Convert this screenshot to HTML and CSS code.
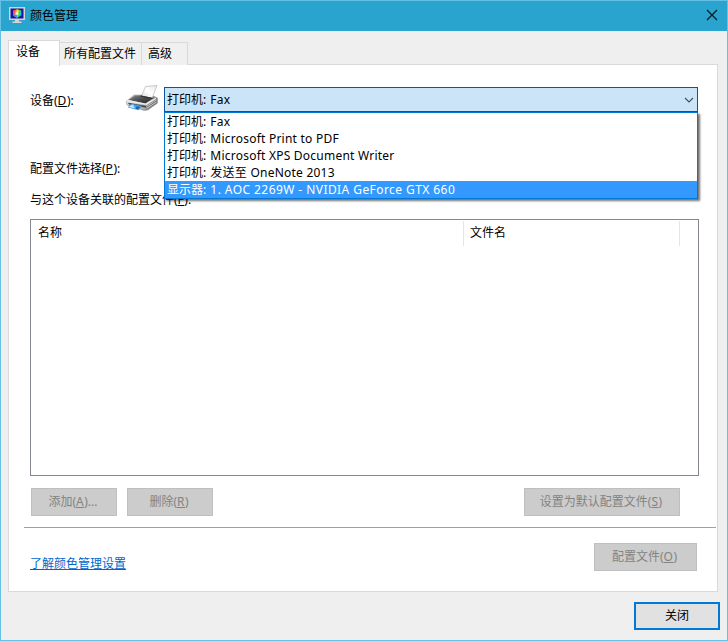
FILE: index.html
```html
<!DOCTYPE html>
<html lang="zh-CN">
<head>
<meta charset="utf-8">
<title>颜色管理</title>
<link rel="stylesheet" href="styles.css">
</head>
<body>
<div class="window">
  <header class="titlebar">
    <svg class="app-icon" width="16" height="16" viewBox="0 0 16 16">
      <defs>
        <linearGradient id="hue" x1="0" x2="1" y1="0" y2="0.3">
          <stop offset="0" stop-color="#f22bd0"/><stop offset=".3" stop-color="#ff5a3c"/><stop offset=".55" stop-color="#ffe82a"/><stop offset=".8" stop-color="#35dc3c"/><stop offset="1" stop-color="#18c8e8"/>
        </linearGradient>
        <radialGradient id="glow"><stop offset="0" stop-color="#fff"/><stop offset="1" stop-color="#fff" stop-opacity="0"/></radialGradient>
      </defs>
      <path d="M0 0h16v13H0z" fill="#d9d3cb"/>
      <path d="M1.5 1.5h13v10h-13z" fill="#1418a8"/>
      <path d="M4 3.5 8 2.2l4.3 1.3v4.7L8 11 4 8.2z" fill="url(#hue)"/>
      <path d="M4 7.5h4V11L4 8.2z" fill="#3b8bff"/>
      <circle cx="8" cy="6.5" r="2.2" fill="url(#glow)"/>
      <path d="M6 13h4v1.4h2.5V16h-9v-1.6H6z" fill="#d4d4d4"/>
    </svg>
    <h1 class="title">颜色管理</h1>
    <svg class="close" width="12" height="12" viewBox="0 0 12 12"><path d="M1 1l10 10M11 1L1 11" stroke="#0b1a20" stroke-width="1.3"/></svg>
  </header>

  <nav class="tabs">
    <div class="tab active">设备</div>
    <div class="tab profiles">所有配置文件</div>
    <div class="tab advanced">高级</div>
  </nav>

  <main class="panel">
    <div class="device-row">
      <label class="device-label">设备(<u>D</u>):</label>
      <svg class="printer" width="34" height="28" viewBox="0 0 34 28">
        <defs>
          <linearGradient id="body" x1="0" x2="1"><stop offset="0" stop-color="#dcdcdc"/><stop offset=".6" stop-color="#a4a4a4"/><stop offset="1" stop-color="#777"/></linearGradient>
          <linearGradient id="lid" x1="0" x2="1" y1="0" y2="1"><stop offset="0" stop-color="#8a8a8a"/><stop offset=".5" stop-color="#4a4d50"/><stop offset="1" stop-color="#242628"/></linearGradient>
          <linearGradient id="paper" x1="0" x2="1" y1="1" y2="0"><stop offset="0" stop-color="#d9d9d9"/><stop offset=".5" stop-color="#fff"/><stop offset="1" stop-color="#e8e8e8"/></linearGradient>
        </defs>
        <path d="M1 17.5 9 11h17l6.5 3v5L23 26l-4 .5L2 21z" fill="url(#body)" stroke="#8c8c8c" stroke-width=".5"/>
        <path d="M16 13 20.5 2.5 32 1.5 27 14.5z" fill="url(#paper)" stroke="#aaa" stroke-width=".6"/>
        <path d="M3.5 16 10 11.5h6.5L28 14l-7.5 5.5z" fill="url(#lid)"/>
        <path d="M16 11.5 28 14l-1 1-12-2.5z" fill="#333"/>
        <path d="M1.5 17 3.5 16l17 3.4L31 13.5v1.4L21.5 21 2 18z" fill="#ececec"/>
        <path d="M3 18.7l18 3.2v1.5L4 20.5z" fill="#353d44"/>
        <path d="M4 21.2 7 19.8l10 2.3-3.5 4.2L3 23.6z" fill="#4d9fe0"/>
        <path d="M4 22.3l4-1.7 2 3.6-5.5-1z" fill="#bce6fa"/>
        <path d="M11.500 22.2l4 .8-2.500 2.2-2.500-.5z" fill="#1666b4"/>
        <path d="M22 22.500l9.500-6.500M22 24.300l9.500-6.300" stroke="#e4e4e4" stroke-width=".7"/>
        <path d="M21.500 23.400l10-6.600M20.500 26l11.500-7" stroke="#666" stroke-width=".6"/>
      </svg>
      <div class="combo">
        <span class="combo-value">打印机: <span class="device">Fax</span></span>
        <svg width="10" height="6" viewBox="0 0 10 6"><path d="M1 1l4 4 4-4" fill="none" stroke="#444b52" stroke-width="1.1"/></svg>
        <ul class="dropdown">
          <li>打印机: <span class="device">Fax</span></li>
          <li>打印机: <span class="device">Microsoft Print to PDF</span></li>
          <li>打印机: <span class="device">Microsoft XPS Document Writer</span></li>
          <li>打印机: <span class="device">发送至 OneNote 2013</span></li>
          <li class="selected">显示器: <span class="device monitor">1. AOC 2269W - NVIDIA GeForce GTX 660</span></li>
        </ul>
      </div>
    </div>
    <div class="selection-label">配置文件选择(<u>P</u>):</div>
    <div class="assoc-label">与这个设备关联的配置文件(<u>F</u>):</div>
    <section class="list">
      <div class="column name">名称</div>
      <div class="column file">文件名</div>
    </section>
    <div class="actions">
      <button class="btn" disabled>添加(<u>A</u>)...</button>
      <button class="btn" disabled>删除(<u>R</u>)</button>
      <button class="btn default" disabled>设置为默认配置文件(<u>S</u>)</button>
    </div>
    <hr class="divider">
    <div class="bottom">
      <a class="link" href="#">了解颜色管理设置</a>
      <button class="btn profile" disabled>配置文件(<u>O</u>)</button>
    </div>
  </main>

  <footer class="footer"><button class="btn primary">关闭</button></footer>
</div>
</body>
</html>
```
FILE: styles.css
```css
* { box-sizing: border-box; }
body {
  margin: 0;
  font: 12px/17px "Noto Sans", "Noto Sans CJK SC", sans-serif;
  color: #000;
}
u { text-underline-offset: 1px; letter-spacing: .5px; }
.window {
  width: 728px;
  height: 641px;
  border: 1px solid #64c0e4;
  background: #efefef;
  overflow: hidden;
}
.titlebar {
  display: flex;
  align-items: center;
  height: 30px;
  padding: 0 9px 2px 8px;
  background: #29a4cf;
}
.title { flex: 1; margin: 0 0 0 5px; font-size: 12px; font-weight: 400; }
.tabs { display: flex; align-items: flex-end; height: 34px; padding: 0 7px; }
.tab {
  height: 23px;
  border: 1px solid #d9d9d9;
  border-width: 1px 1px 0 0;
  background: #f0f0f0;
  line-height: 22px;
  padding-left: 4px;
}
.tab.active {
  position: relative;
  z-index: 1;
  width: 52px;
  height: 26px;
  margin-bottom: -1px;
  border-left-width: 1px;
  background: #fff;
  padding-left: 7px;
}
.tab.profiles { width: 82px; }
.tab.advanced { width: 46px; padding-left: 6px; }
.panel {
  width: 710px;
  height: 528px;
  margin: -1px 0 0 7px;
  padding: 22px 18px 0 21px;
  border: 1px solid #d9d9d9;
  background: #fff;
}
.device-row { display: flex; height: 25px; }
.device-label { width: 95px; padding-top: 5px; }
.printer { width: 34px; margin: -3px 5px 0 0; }
.combo {
  position: relative;
  display: flex;
  flex: none;
  align-items: center;
  justify-content: space-between;
  width: 534px;
  height: 25px;
  padding: 0 3px 0 2px;
  border: 1px solid #0a559c;
  background: #cce4f7;
}
.device { margin-left: 1px; letter-spacing: .23px; }
.monitor { letter-spacing: .43px; }
.dropdown {
  position: absolute;
  top: 24px;
  left: -1px;
  width: 534px;
  height: 87px;
  margin: 0;
  padding: 0;
  border: 1px solid #0078d7;
  background: #fff;
  box-shadow: 2px 2px 2px rgba(0, 0, 0, .55);
  list-style: none;
}
.dropdown li { height: 17px; padding-left: 2px; white-space: nowrap; }
.dropdown .selected { background: #3399ff; color: #fff; }
.selection-label { margin-top: 48px; }
.assoc-label { margin-top: 14px; }
.list {
  display: flex;
  width: 669px;
  height: 257px;
  margin-top: 11px;
  border: 1px solid #828790;
}
.column { height: 25px; margin-top: 1px; padding: 3px 0 0 6px; border-right: 1px solid #e5e5e5; }
.column.name { width: 433px; padding-left: 7px; }
.column.file { width: 216px; }
.actions { display: flex; gap: 10px; margin: 12px 0 0 1px; }
.btn {
  width: 86px;
  height: 28px;
  padding: 0 2px 1px 0;
  border: 1px solid #bfbfbf;
  background: #ccc;
  color: #838383;
  font: inherit;
}
.btn.default { width: 156px; margin-left: 301px; }
.divider { width: 692px; height: 1px; margin: 11px 0 0 -6px; border: 0; background: #a0a0a0; }
.bottom { display: flex; justify-content: space-between; padding: 15px 2px 0 0; }
.link { margin-top: 12px; color: #0066cc; }
.btn.profile { width: 103px; }
.footer { display: flex; justify-content: flex-end; padding: 10px 7px 0 0; }
.btn.primary { padding: 0 0 1px; border: 2px solid #0078d7; background: #e1e1e1; color: #000; }
```
